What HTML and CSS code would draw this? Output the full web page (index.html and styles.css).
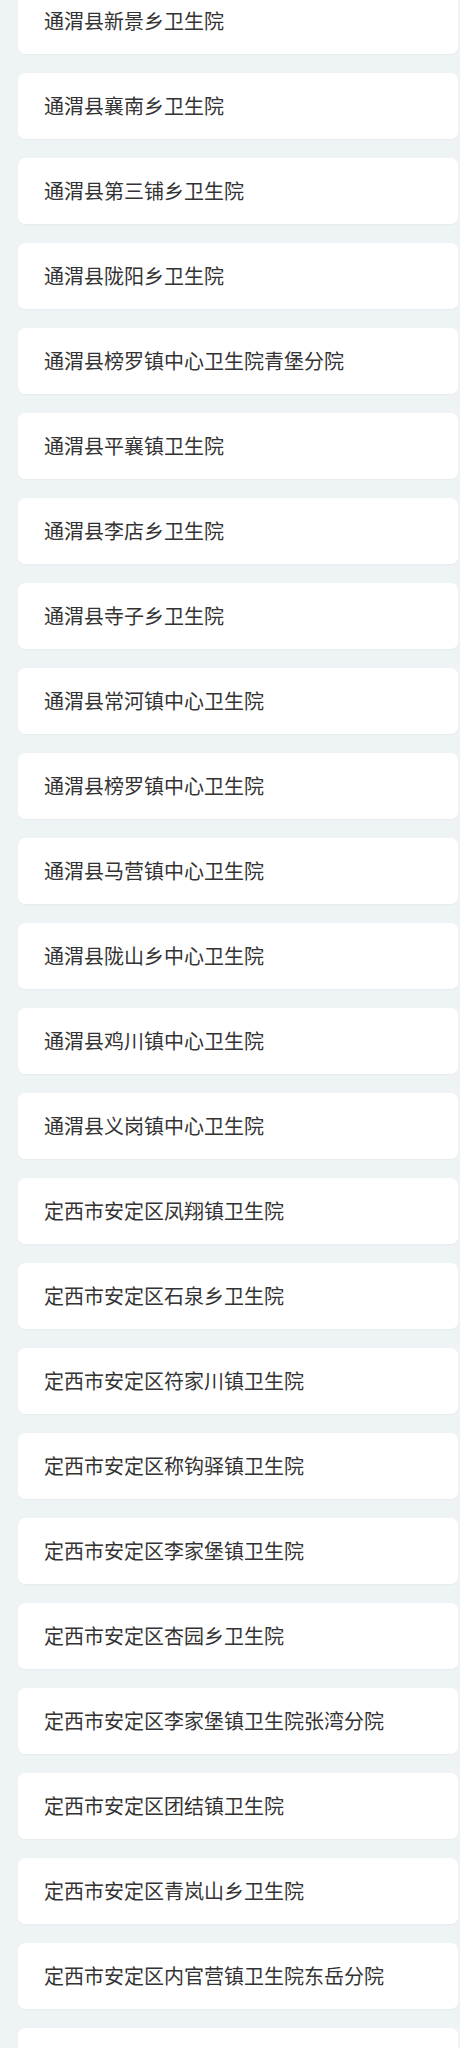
FILE: index.html
```html
<!DOCTYPE html>
<html lang="zh">
<head>
<meta charset="utf-8">
<link rel="stylesheet" href="styles.css">
</head>
<body>
<ul class="list">
<li class="card">通渭县新景乡卫生院</li>
<li class="card">通渭县襄南乡卫生院</li>
<li class="card">通渭县第三铺乡卫生院</li>
<li class="card">通渭县陇阳乡卫生院</li>
<li class="card">通渭县榜罗镇中心卫生院青堡分院</li>
<li class="card">通渭县平襄镇卫生院</li>
<li class="card">通渭县李店乡卫生院</li>
<li class="card">通渭县寺子乡卫生院</li>
<li class="card">通渭县常河镇中心卫生院</li>
<li class="card">通渭县榜罗镇中心卫生院</li>
<li class="card">通渭县马营镇中心卫生院</li>
<li class="card">通渭县陇山乡中心卫生院</li>
<li class="card">通渭县鸡川镇中心卫生院</li>
<li class="card">通渭县义岗镇中心卫生院</li>
<li class="card">定西市安定区凤翔镇卫生院</li>
<li class="card">定西市安定区石泉乡卫生院</li>
<li class="card">定西市安定区符家川镇卫生院</li>
<li class="card">定西市安定区称钩驿镇卫生院</li>
<li class="card">定西市安定区李家堡镇卫生院</li>
<li class="card">定西市安定区杏园乡卫生院</li>
<li class="card">定西市安定区李家堡镇卫生院张湾分院</li>
<li class="card">定西市安定区团结镇卫生院</li>
<li class="card">定西市安定区青岚山乡卫生院</li>
<li class="card">定西市安定区内官营镇卫生院东岳分院</li>
<li class="card card-empty"></li>
</ul>
</body>
</html>
```
FILE: styles.css
```css
html, body {
  margin: 0;
  padding: 0;
  background: #eef3f6;
}
body {
  font-family: "Noto Sans CJK SC", "Noto Sans", sans-serif;
  color: #333;
  overflow: hidden;
}
.list {
  list-style: none;
  margin: -12px 2px 0 18px;
  padding: 0;
  display: flex;
  flex-direction: column;
  gap: 19px;
}
.card {
  height: 66px;
  box-sizing: border-box;
  background: #fff;
  border-radius: 7px;
  box-shadow: 0 1px 2px rgba(0, 0, 0, 0.04);
  display: flex;
  align-items: center;
  padding-left: 26px;
  font-size: 20px;
  line-height: 1;
}
```
